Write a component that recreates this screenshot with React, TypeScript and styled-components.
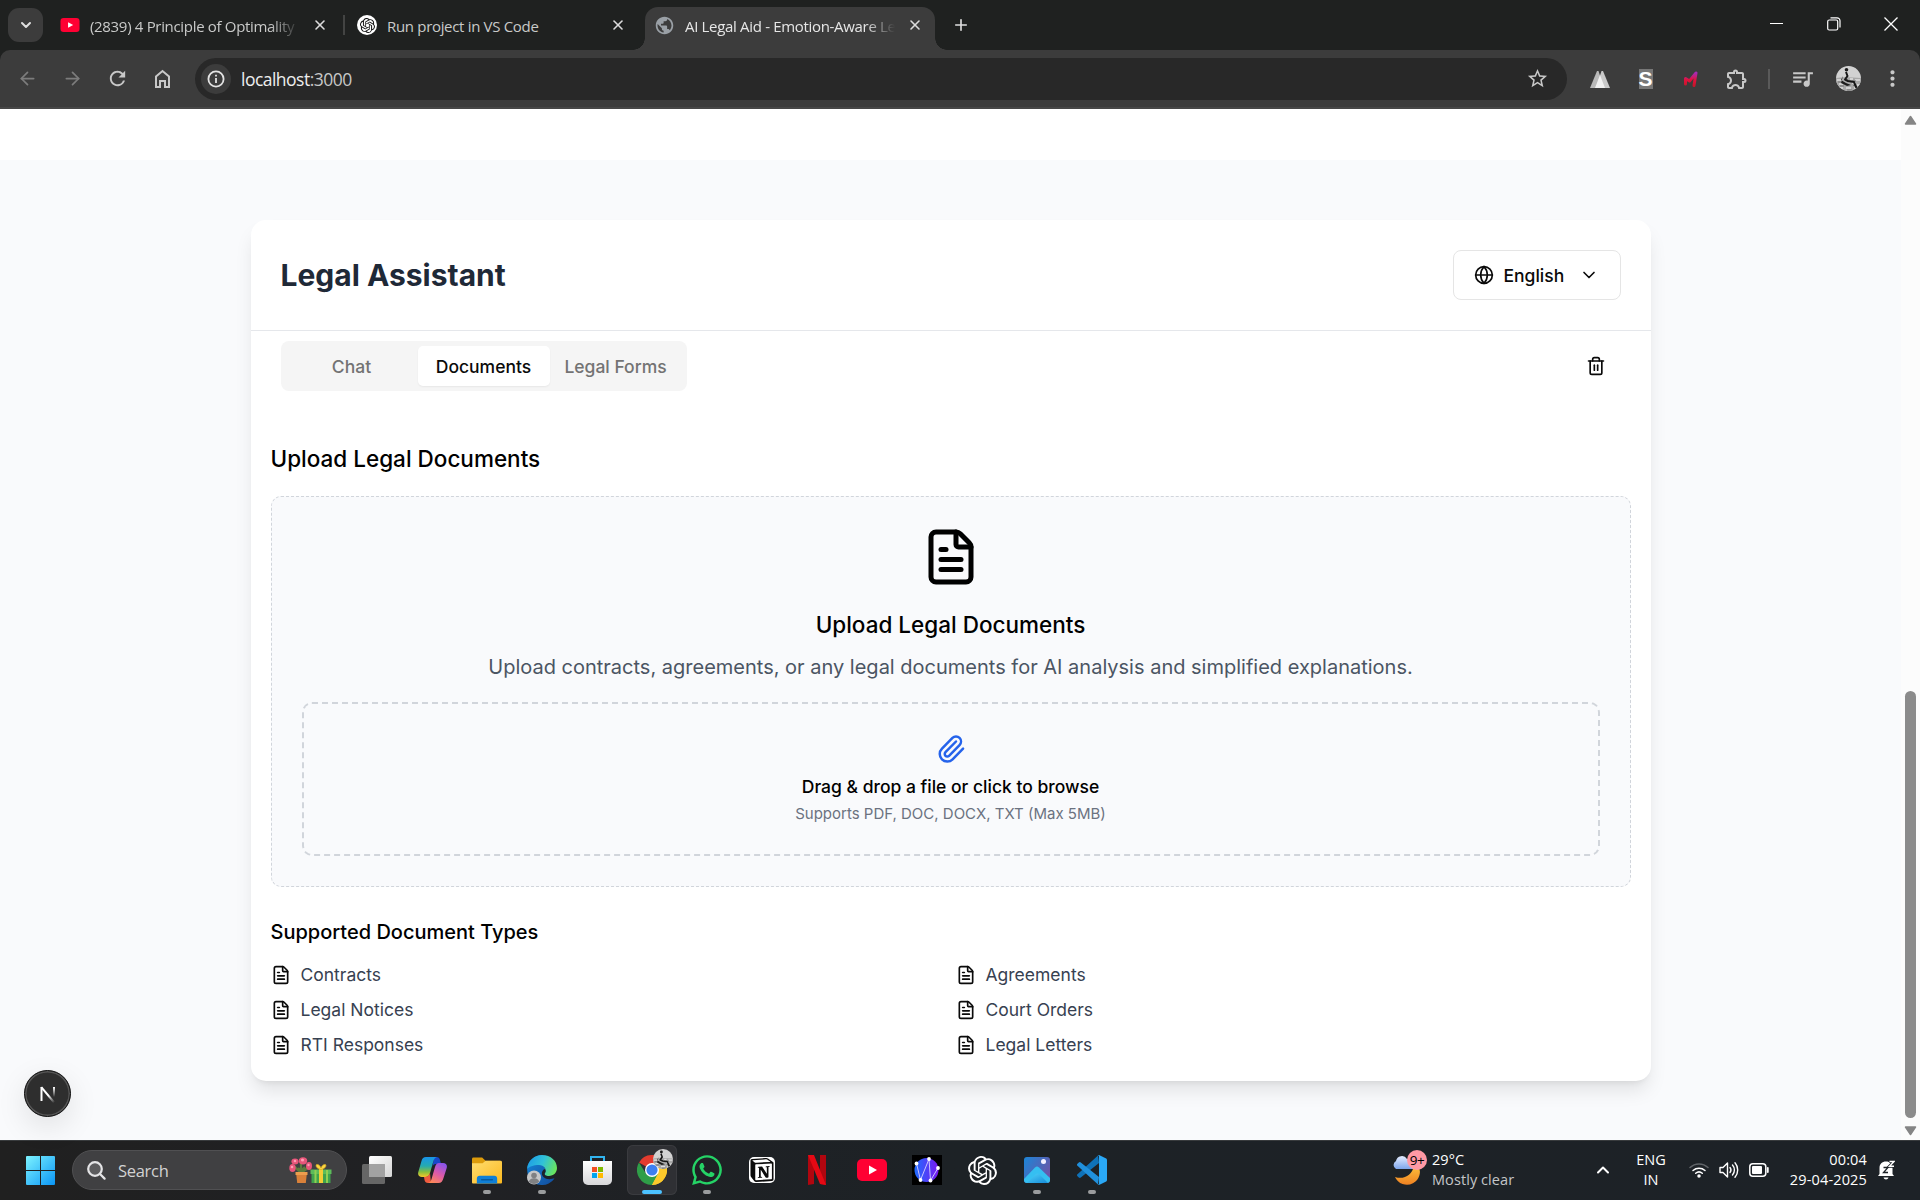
import React from "react";
import styled, { createGlobalStyle } from "styled-components";
import { ChevronDown, ChevronUp, FileText, Globe, Paperclip, Trash2, ArrowLeft, ArrowRight, Plus, X } from "lucide-react";
import { MdRefresh, MdStarBorder, MdQueueMusic, MdOutlineExtension, MdMoreVert, MdPublic } from "react-icons/md";
import { SiOpenai, SiNotion } from "react-icons/si";
import { FaWhatsapp } from "react-icons/fa";

const Global = createGlobalStyle`
  * { box-sizing: border-box; }
  body { margin: 0; background: #fff; overflow: hidden; }
  h1, h2, h3, p, ul { margin: 0; padding: 0; font-weight: 400; }
  button { border: 0; padding: 0; background: none; font: inherit; color: inherit; }
  svg { display: block; flex: none; }
`;

const systemFont = `"Open Sans", "Noto Sans", sans-serif`;

const Screen = styled.div`
  width: 1920px;
  height: 1200px;
  display: flex;
  flex-direction: column;
  overflow: hidden;
  font-family: Inter, sans-serif;
`;

/* ---------- Browser chrome ---------- */

const TabStrip = styled.div`
  height: 50px;
  flex: none;
  display: flex;
  background: #1f2120;
  padding-left: 8px;
  color: #dfdfdf;
  font-family: ${systemFont};
`;

const TabSearch = styled.button`
  width: 35px;
  height: 34px;
  margin-top: 8px;
  border-radius: 11px;
  background: #3c3c3c;
  display: grid;
  place-items: center;
`;

const Tab = styled.div<{ $width: number; $active?: boolean; $left?: number }>`
  width: ${(p) => p.$width}px;
  height: ${(p) => (p.$active ? 43 : 36)}px;
  margin-top: 7px;
  padding: ${(p) => (p.$active ? "0 12px 7px 9px" : `0 15px 0 ${p.$left ?? 17}px`)};
  display: flex;
  align-items: center;
  position: relative;
  background: ${(p) => (p.$active ? "#3c3c3c" : "transparent")};
  color: ${(p) => (p.$active ? "#e6e6e6" : "#c9cac9")};
  border-radius: 13px 13px 0 0;
  ${(p) =>
    p.$active &&
    `margin-left: 4px;
    &::before, &::after {
      content: "";
      position: absolute;
      bottom: 0;
      width: 12px;
      height: 12px;
    }
    &::before { right: 100%; background: radial-gradient(circle at 0 0, transparent 11.5px, #3c3c3c 12px); }
    &::after { left: 100%; background: radial-gradient(circle at 100% 0, transparent 11.5px, #3c3c3c 12px); }`}
`;

const TabTitle = styled.span<{ $fade?: boolean }>`
  flex: 1;
  min-width: 0;
  margin: 1px 0 0 10px;
  font-size: 15px;
  line-height: 24px;
  letter-spacing: -0.32px;
  white-space: nowrap;
  ${(p) => p.$fade && "mask-image: linear-gradient(90deg, #000 calc(100% - 42px), transparent calc(100% - 12px));"}
`;

const TabDivider = styled.div`
  width: 2px;
  height: 20px;
  margin: 15px 0 0;
  background: #434443;
`;

const Favicon = styled.div`
  width: 20px;
  height: 20px;
  border-radius: 50%;
  background: #fff;
  color: #111;
  display: grid;
  place-items: center;
`;

const NewTab = styled.button`
  width: 51px;
  height: 50px;
  display: grid;
  place-items: center;
`;

const WindowButtons = styled.div`
  margin-left: auto;
  margin-right: 1px;
  display: flex;
  color: #fff;
`;

const WindowButton = styled.button`
  width: 57px;
  height: 48px;
  display: grid;
  place-items: center;
`;

const ToolbarWrap = styled.div`
  height: 59px;
  flex: none;
  background: #1f2120;
`;

const Toolbar = styled.div`
  height: 59px;
  border-radius: 10px 10px 0 0;
  background: #3c3c3c;
  border-bottom: 2px solid #474747;
  display: flex;
  align-items: center;
  padding: 0 2px 0 5px;
  color: #c8c8c8;
  font-family: ${systemFont};
`;

const ToolButton = styled.button<{ $dim?: boolean; $width?: number }>`
  width: ${(p) => p.$width ?? 45}px;
  height: 42px;
  display: grid;
  place-items: center;
  color: ${(p) => (p.$dim ? "#7c7c7c" : "#c8c8c8")};
`;

const Omnibox = styled.div`
  width: 1372px;
  height: 42px;
  margin-left: 10px;
  border-radius: 21px;
  background: #282828;
  display: flex;
  align-items: center;
  padding: 0 18px 0 6px;
`;

const SiteInfo = styled.div`
  width: 30px;
  height: 30px;
  border-radius: 50%;
  background: #3c3c3c;
  display: grid;
  place-items: center;
`;

const Address = styled.div`
  flex: 1;
  margin-left: 10px;
  font-size: 17.5px;
  letter-spacing: -0.52px;
  color: #c7c7c7;
  span { color: #eee; }
`;

const Extensions = styled.div`
  display: flex;
  align-items: center;
  margin-left: 10px;
`;

const ToolDivider = styled.div`
  width: 2px;
  height: 20px;
  margin: 0 10px 0 8px;
  background: #5a5a5a;
`;

const SLetter = styled.span`
  width: 14px;
  height: 20px;
  background: #777;
  color: #fff;
  font: 700 21px/20px "Liberation Sans", sans-serif;
  display: grid;
  place-items: center;
`;

/* ---------- Page ---------- */

const Viewport = styled.div`
  flex: 1;
  min-height: 0;
  display: flex;
`;

const Page = styled.div`
  position: relative;
  width: 1901px;
  background: #f9fafc;
  border-top: 51px solid #fff;
  padding: 60px 250.500px 0;
`;

const Card = styled.main`
  height: 861px;
  border-radius: 15px;
  background: #fff;
  box-shadow: 0 12.5px 18.75px -3.75px rgba(0, 0, 0, 0.1), 0 5px 7.5px -5px rgba(0, 0, 0, 0.1);
`;

const CardHeader = styled.header`
  height: 111px;
  padding: 0 30px;
  border-bottom: 1px solid #e5e7eb;
  display: flex;
  align-items: center;
  justify-content: space-between;
`;

const Title = styled.h1`
  font-size: 30px;
  line-height: 40px;
  font-weight: 700;
  color: #1f2937;
`;

const LanguageButton = styled.button`
  width: 168px;
  height: 50px;
  padding: 0 20px;
  border: 1px solid #e5e5e5;
  border-radius: 8px;
  display: flex;
  align-items: center;
  font-size: 17.5px;
  font-weight: 500;
  color: #0a0a0a;
  span { margin: 0 15px 0 10px; }
`;

const TabsRow = styled.div`
  height: 60px;
  padding: 10px 30px 0;
  display: flex;
  justify-content: space-between;
`;

const TabsList = styled.div`
  width: 406px;
  height: 50px;
  padding: 5px;
  border-radius: 8px;
  background: #f5f5f5;
  display: grid;
  grid-template-columns: repeat(3, 1fr);
`;

const TabTrigger = styled.button<{ $active?: boolean }>`
  border-radius: 5px;
  font-size: 17.5px;
  font-weight: 500;
  white-space: nowrap;
  color: ${(p) => (p.$active ? "#0a0a0a" : "#737373")};
  background: ${(p) => (p.$active ? "#fff" : "transparent")};
  box-shadow: ${(p) => (p.$active ? "0 1px 2px rgba(0, 0, 0, 0.06)" : "none")};
`;

const ClearButton = styled.button`
  width: 50px;
  height: 50px;
  display: grid;
  place-items: center;
  color: #0a0a0a;
`;

const Content = styled.section`
  padding: 50px 20px 0;
  color: #000;
`;

const Heading = styled.h2`
  font-size: 22.5px;
  line-height: 35px;
  font-weight: 500;
`;

const UploadPanel = styled.div`
  height: 391px;
  margin-top: 20px;
  padding: 30px;
  border: 1px dashed #d1d5db;
  border-radius: 10px;
  background: #f9fafc;
  display: flex;
  flex-direction: column;
  align-items: center;
  ${Heading} { margin-top: 20px; }
`;

const Lead = styled.p`
  margin: 10px 0 20px;
  font-size: 20px;
  line-height: 30px;
  color: #4b5563;
`;

const DropZone = styled.div`
  width: 100%;
  height: 154px;
  padding-top: 30px;
  border: 2px dashed #d1d5db;
  border-radius: 10px;
  display: flex;
  flex-direction: column;
  align-items: center;
`;

const DropTitle = styled.p`
  margin-top: 10px;
  font-size: 17.5px;
  line-height: 25px;
  font-weight: 500;
`;

const DropHint = styled.p`
  margin-top: 5px;
  font-size: 15px;
  line-height: 20px;
  color: #6b7280;
`;

const TypesHeading = styled.h3`
  margin: 30px 0 15px;
  font-size: 20px;
  line-height: 30px;
  font-weight: 500;
`;

const TypeGrid = styled.ul`
  display: grid;
  grid-template-columns: 1fr 1fr;
  gap: 10px;
  list-style: none;
`;

const TypeItem = styled.li`
  display: flex;
  align-items: center;
  gap: 10px;
  font-size: 17.5px;
  line-height: 25px;
  color: #374151;
  svg { color: #0a0a0a; }
`;

const DevBadge = styled.div`
  position: absolute;
  left: 24px;
  bottom: 23px;
  width: 47px;
  height: 47px;
  border-radius: 50%;
  background: #2e2e2e;
  border: 1px solid #111;
  box-shadow: inset 0 0 0 1.5px #555, 0 10px 30px rgba(0, 0, 0, 0.1);
  display: grid;
  place-items: center;
`;

const Scrollbar = styled.div`
  width: 19px;
  background: #fcfcfc;
  display: flex;
  flex-direction: column;
  align-items: center;
  padding: 6px 0 4px;
`;

const Thumb = styled.div`
  width: 11px;
  height: 427px;
  margin: auto 0 8px;
  border-radius: 6px;
  background: #8b8b8b;
`;

/* ---------- Taskbar ---------- */

const Taskbar = styled.footer`
  height: 60px;
  flex: none;
  display: flex;
  align-items: center;
  background: linear-gradient(90deg, #202020, #202124 25%, #1d2226 50%, #1d2227);
  border-top: 1px solid #383b3d;
  padding: 0 0 1px 26px;
  color: #fff;
  font-family: ${systemFont};
`;

const SearchPill = styled.div`
  width: 275px;
  height: 40px;
  margin: 0 5px 0 17px;
  padding: 0 14px;
  border-radius: 20px;
  background: #404042;
  border: 1px solid #505052;
  display: flex;
  align-items: center;
  font-size: 16.5px;
  letter-spacing: -0.3px;
  color: #d2d2d2;
  span { flex: 1; margin-left: 12px; }
`;

const AppSlot = styled.div<{ $focused?: boolean; $running?: boolean }>`
  position: relative;
  width: 50px;
  height: 50px;
  margin-right: 5px;
  border-radius: 6px;
  display: grid;
  place-items: center;
  background: ${(p) => (p.$focused ? "#2f3034" : "transparent")};
  box-shadow: ${(p) => (p.$focused ? "inset 0 0 0 1px #3a3b3f" : "none")};
  &::after {
    content: "";
    display: ${(p) => (p.$running || p.$focused ? "block" : "none")};
    position: absolute;
    bottom: 1px;
    left: ${(p) => (p.$focused ? 15 : 21)}px;
    width: ${(p) => (p.$focused ? 20 : 8)}px;
    height: 4px;
    border-radius: 2px;
    background: ${(p) => (p.$focused ? "#4cc2ff" : "#9a9c9e")};
  }
`;

const Tray = styled.div`
  margin-left: auto;
  display: flex;
  align-items: center;
  font-size: 14.5px;
  line-height: 20px;
`;

const Stack = styled.div<{ $width: number; $align: string; $muted?: boolean; $spacing?: number }>`
  width: ${(p) => p.$width}px;
  display: flex;
  flex-direction: column;
  margin-bottom: 1px;
  white-space: nowrap;
  text-align: ${(p) => p.$align};
  letter-spacing: ${(p) => p.$spacing ?? 0}px;
  span:last-child { color: ${(p) => (p.$muted ? "#c4c6c8" : "#fff")}; }
`;

const WeatherBox = styled.div`
  position: relative;
  width: 35px;
  height: 36px;
  margin: 0 5px 5px 0;
`;

const WeatherBadge = styled.span`
  position: absolute;
  top: 0;
  right: 0;
  width: 20px;
  height: 20px;
  border-radius: 50%;
  background: #ff99a4;
  color: #000;
  font-size: 13.5px;
  line-height: 20px;
  letter-spacing: -0.5px;
  text-align: center;
`;

const TrayIcon = styled.div<{ $width: number }>`
  width: ${(p) => p.$width}px;
  display: grid;
  place-items: center;
`;

/* ---------- Drawings ---------- */

const YouTube = ({ w, h }: { w: number; h: number }) => (
  <svg width={w} height={h} viewBox="0 0 30 22">
    <rect width="30" height="22" rx="5" fill="#ff0033" />
    <path d="M12 6.5v9l8-4.5z" fill="#fff" />
  </svg>
);

const HomeIcon = () => (
  <svg width="17" height="20" viewBox="0 0 17 20" fill="none" stroke="currentColor" strokeWidth="2">
    <path d="M2 7.500 8.500 2 15 7.500V18h-4v-6H6v6H2z" />
  </svg>
);

const InfoIcon = () => (
  <svg width="18" height="18" viewBox="0 0 18 18" fill="none" stroke="#e3e3e3" strokeWidth="1.8">
    <circle cx="9" cy="9" r="7.6" />
    <path d="M9 8v5M9 4.8v1.8" />
  </svg>
);

const RestoreIcon = () => (
  <svg width="14" height="14" viewBox="0 0 14 14" fill="none" stroke="#fff" strokeWidth="1.2">
    <rect x=".7" y="3" width="10" height="10" rx="1.5" />
    <path d="M3.5.8H10a3 3 0 0 1 3 3v6.7" />
  </svg>
);

const PeaksIcon = () => (
  <svg width="20" height="18" viewBox="0 0 20 18">
    <path d="M0 18 7 1h1.500L14 18z" fill="#b9b9b9" />
    <path d="M6 18 11.500 1H13l7 17z" fill="#c9c9c9" />
    <path d="M5 18 10 5l5 13z" fill="#f1f1f1" />
  </svg>
);

const MarkIcon = () => (
  <svg width="16" height="18" viewBox="0 0 16 18" fill="none" strokeLinecap="round" strokeLinejoin="round">
    <defs>
      <linearGradient id="mark" x1="0" y1="0" x2="0" y2="1">
        <stop offset="0" stopColor="#a72bb5" />
        <stop offset=".55" stopColor="#e0123c" />
        <stop offset="1" stopColor="#c9152c" />
      </linearGradient>
    </defs>
    <path d="M2.5 14V8.500L6.500 11l6.500-8-2 12.500" stroke="url(#mark)" strokeWidth="3" />
  </svg>
);

const Portrait = ({ size }: { size: number }) => (
  <svg width={size} height={size} viewBox="0 0 25 25">
    <clipPath id={`face${size}`}><circle cx="12.5" cy="12.5" r="12.5" /></clipPath>
    <g clipPath={`url(#face${size})`}>
      <rect width="25" height="25" fill="#d2d2d2" />
      <path d="M0 12 9 11l16 1v13H0z" fill="#a8a8a8" />
      <path d="M1 14h5M14 13h3M19 14h5M3 18h4M16 17h4M2 22h5M21 19h4M10 22h5M18 22h3" stroke="#dedede" strokeWidth="1.500" />
      <path d="M2 16h3M16 15h4M4 20h4M17 19.500h3M11 24h5" stroke="#757575" strokeWidth="1.200" />
      <circle cx="10.500" cy="3.800" r="1.800" fill="#1b1b1b" />
      <path d="m10 6 1.500 4-2.500 3.500 3 1.500 6 1 2.500 6" stroke="#161616" strokeWidth="2" fill="none" strokeLinejoin="round" />
      <path d="m7 10-2 4 5 3 5 2-4 1-6-3z" fill="#1c1c1c" />
    </g>
  </svg>
);

const NextMark = () => (
  <svg width="18" height="18" viewBox="0 0 18 18" fill="none" strokeWidth="2">
    <defs>
      <linearGradient id="nd" gradientUnits="userSpaceOnUse" x1="10" y1="10" x2="16" y2="17">
        <stop stopColor="#fff" /><stop offset="1" stopColor="#fff" stopOpacity="0" />
      </linearGradient>
      <linearGradient id="nv" gradientUnits="userSpaceOnUse" x1="15" y1="2" x2="15" y2="12">
        <stop stopColor="#fff" /><stop offset="1" stopColor="#fff" stopOpacity="0" />
      </linearGradient>
    </defs>
    <path d="M2.5 16V2" stroke="#fff" />
    <path d="M2.3 2.2 15.5 18" stroke="url(#nd)" />
    <path d="M15 2v10" stroke="url(#nv)" />
  </svg>
);

const Triangle = ({ down }: { down?: boolean }) => (
  <svg width="13" height="10" viewBox="0 0 13 10">
    <path d={down ? "M1.5 1h10l-5 7.5z" : "M1.5 9h10l-5-7.5z"} fill="#858585" stroke="#858585" strokeWidth="1.5" strokeLinejoin="round" />
  </svg>
);

const WindowsLogo = () => (
  <svg width="29" height="29" viewBox="0 0 29 29">
    <defs>
      <linearGradient id="win" x1="0" y1="0" x2="1" y2="1">
        <stop stopColor="#7df3ff" /><stop offset="1" stopColor="#0a95f5" />
      </linearGradient>
    </defs>
    <path d="M1 0h13v14H0V1a1 1 0 0 1 1-1zM15 0h13a1 1 0 0 1 1 1v13H15zM0 15h14v14H1a1 1 0 0 1-1-1zM15 15h14v13a1 1 0 0 1-1 1H15z" fill="url(#win)" />
  </svg>
);

const SearchIcon = () => (
  <svg width="19" height="19" viewBox="0 0 19 19" fill="none" stroke="#e4e4e6" strokeWidth="2.2" strokeLinecap="round">
    <circle cx="8" cy="8" r="6.8" fill="#5c5c5e" />
    <path d="m13 13 4.6 4.6" />
  </svg>
);

const GiftArt = () => (
  <svg width="43" height="27" viewBox="0 0 43 27">
    <path d="M12 16 5 9m7 7V6m0 10 8-6m-8 4L9 11m3 3 4-4" stroke="#5d7c3d" strokeWidth="2.2" fill="none" />
    <g fill="#e8557a">
      <ellipse cx="3.5" cy="11" rx="3.2" ry="4" /><ellipse cx="6" cy="4.5" rx="3.6" ry="3" />
      <ellipse cx="14" cy="3.8" rx="4.2" ry="3.6" /><ellipse cx="20" cy="9" rx="3" ry="4" />
    </g>
    <g fill="#ff9cb4">
      <circle cx="3" cy="10" r="1.3" /><circle cx="6" cy="4" r="1.3" /><circle cx="13.5" cy="3" r="1.6" /><circle cx="19.5" cy="8" r="1.2" />
    </g>
    <path d="M7 15h11l-1.2 11H8.2z" fill="#d9813a" /><path d="M6.5 15h12v3h-12z" fill="#ed9d4e" />
    <path d="M22.5 15h19v11h-19z" fill="#3fa34d" /><path d="M21.5 12.5h21V17h-21z" fill="#5cbc5a" />
    <path d="M25.500 13h2v13h-2zM37 13h2v13h-2z" fill="#8fd052" />
    <path d="M30 12h4v14h-4z" fill="#f4cd35" />
    <path d="M32 12.5c-5-1-5.500-4-4.500-5 2-.5 3.500 1 4.500 3.500 1-2.500 2.500-4 4.500-3.500 1 1 .5 4-4.500 5z" fill="#f9d743" stroke="#d7a51d" strokeWidth=".7" />
  </svg>
);

const TaskViewIcon = () => (
  <svg width="30" height="28" viewBox="0 0 30 28">
    <defs><linearGradient id="tv" x1="0" y1="0" x2="1" y2="1"><stop stopColor="#fff" /><stop offset="1" stopColor="#d5d5d5" /></linearGradient></defs>
    <rect x="7" width="23" height="21" rx="1.5" fill="url(#tv)" />
    <rect y="8" width="23" height="20" rx="1.5" fill="#666" />
    <path d="M7 8h15a1 1 0 0 1 1 1v12H7z" fill="#a2a2a2" />
  </svg>
);

const CopilotIcon = () => (
  <svg width="29" height="26" viewBox="0 0 29 26">
    <defs>
      <linearGradient id="cp1" x1="0" y1="0" x2="0" y2="1"><stop stopColor="#1994ea" /><stop offset=".45" stopColor="#25aab0" /><stop offset=".75" stopColor="#89bf3c" /><stop offset="1" stopColor="#f7c72b" /></linearGradient>
      <linearGradient id="cp2" x1=".7" y1="0" x2=".2" y2="1"><stop stopColor="#8b54ea" /><stop offset=".5" stopColor="#dc5aa8" /><stop offset="1" stopColor="#ff8a54" /></linearGradient>
    </defs>
    <path d="M16 0h2.500c2 0 3 1 3.500 3l1 4h-5c-2 0-3 1-3.500 3z" fill="#1748c9" />
    <path d="M8 0h11c-2 .5-3 2-3.700 4.500L12 16c-.8 2.500-2 4-4.500 4H4c-3 0-4.500-2-3.700-5L3.500 4C4.200 1.500 5.500 0 8 0z" fill="url(#cp1)" />
    <path d="M13 26H10c-2 0-3-1-3.500-3L6 20c3 0 5-1 6-4z" fill="#f05b3f" />
    <path d="M21 6h4c3 0 4.500 2 3.700 5L25.500 21c-.8 3-2.200 5-5 5H10c2-.5 3-2 3.700-4.500L17 10c.8-2.500 2-4 4-4z" fill="url(#cp2)" />
  </svg>
);

const FolderIcon = () => (
  <svg width="30" height="27" viewBox="0 0 31 27">
    <defs><linearGradient id="fo" x1="0" y1="0" x2="1" y2="1"><stop stopColor="#ffdd70" /><stop offset="1" stopColor="#fcb91f" /></linearGradient></defs>
    <path d="M1.500 0h9L14 3.500h15V12H0V1.500A1.500 1.500 0 0 1 1.500 0z" fill="#dd9b0b" />
    <path d="M0 6h11l3-2.500h15.500A1.500 1.500 0 0 1 31 5v21a1 1 0 0 1-1 1H1a1 1 0 0 1-1-1z" fill="url(#fo)" />
    <path d="M5 27v-5a3 3 0 0 1 3-3h15a3 3 0 0 1 3 3v5z" fill="#0f7fd6" />
    <path d="M10 23h11" stroke="#075a9f" strokeWidth="1.500" strokeLinecap="round" />
  </svg>
);

const EdgeIcon = () => (
  <svg width="30" height="30" viewBox="0 0 30 30">
    <defs>
      <linearGradient id="e1" x1="0" y1=".3" x2="1" y2=".6"><stop stopColor="#1d9de6" /><stop offset=".5" stopColor="#31c2d8" /><stop offset="1" stopColor="#6be55a" /></linearGradient>
      <linearGradient id="e2" x1="0" y1="0" x2="1" y2="1"><stop stopColor="#1689dc" /><stop offset="1" stopColor="#124b9b" /></linearGradient>
    </defs>
    <path d="M15 0a15 15 0 1 0 12.500 23.500L20 20l-3-10z" fill="url(#e2)" />
    <path d="M0 14C1 5 8 0 15 0c9 0 15 6 15 13 0 5-4 8-8 8-4 0-5-1.500-4-3 2-4-1-8-6-8C6 10 2 12 0 14z" fill="url(#e1)" />
    <path d="M18 18c-1 1.500 0 3 4 3 2 0 4-.5 5.500-1.500L27.500 23c-3 1.500-8 2-11-1-2.500-2.500-2-6 1-8 1.500 1 1.500 3 .5 4z" fill="#1e2227" />
    <circle cx="7" cy="22.500" r="7" fill="#c6c7c8" /><circle cx="7" cy="20.500" r="2.800" fill="#808183" />
    <path d="M2 27c0-5 10-5 10 0a7 7 0 0 1-10 0z" fill="#808183" />
  </svg>
);

const StoreIcon = () => (
  <svg width="29" height="29" viewBox="0 0 29 29">
    <defs><linearGradient id="st" x1="0" y1="0" x2="0" y2="1"><stop stopColor="#fff" /><stop offset="1" stopColor="#d7d7d9" /></linearGradient></defs>
    <path d="M8 5V1h13v4" stroke="#31b4ef" strokeWidth="2" fill="none" />
    <path d="M0 5h29v19a5 5 0 0 1-5 5H5a5 5 0 0 1-5-5z" fill="url(#st)" />
    <path d="M9 11h5v5H9z" fill="#f25022" /><path d="M15 11h5v5h-5z" fill="#7fba00" />
    <path d="M9 17h5v5H9z" fill="#00a4ef" /><path d="M15 17h5v5h-5z" fill="#ffb900" />
  </svg>
);

const ChromeBox = styled.div`
  position: relative;
  width: 30px;
  height: 30px;
  & > svg:last-child { position: absolute; right: -6px; top: -6px; }
`;

const ChromeIcon = () => (
  <ChromeBox>
    <svg width="30" height="30" viewBox="0 0 30 30">
      <path d="M15 15 2 7.500A15 15 0 0 1 28 7.500z" fill="#e33b2e" />
      <path d="M15 15 28 7.500A15 15 0 0 1 15 30z" fill="#fdc92b" />
      <path d="M8.900 18.500 2 7.500A15 15 0 0 0 15 30l6.100-11z" fill="#2f9e48" />
      <path d="M15 8h13.200A15 15 0 0 1 15 30l6.200-11.500z" fill="#fdc92b" />
      <circle cx="15" cy="15" r="7" fill="#fff" /><circle cx="15" cy="15" r="5.600" fill="#3c7ff0" />
    </svg>
    <Portrait size={20} />
  </ChromeBox>
);

const NotionBox = styled.div`
  width: 26px;
  height: 26px;
  border-radius: 5px;
  background: #fff;
  color: #0b0b0b;
  display: grid;
  place-items: center;
`;

const NetflixIcon = () => (
  <svg width="18" height="30" viewBox="0 0 18 30">
    <path d="M0 0h6v29l-6 1zM12 0h6v30l-6-1z" fill="#b1060f" />
    <path d="M0 0h6l12 30-6-1z" fill="#e50914" />
  </svg>
);

const NetworkIcon = () => (
  <svg width="30" height="30" viewBox="0 0 30 30">
    <defs><linearGradient id="nw"><stop stopColor="#1f6dff" /><stop offset="1" stopColor="#7a18f0" /></linearGradient></defs>
    <rect width="30" height="30" fill="#000" />
    <circle cx="14.500" cy="15" r="12" fill="url(#nw)" />
    <path d="M4.500 8.500 8.500 25 17 4l1.500 21.500L26 13" fill="none" stroke="#c9c3ff" strokeWidth="1" />
    <g fill="#fff"><circle cx="4.500" cy="8.500" r="1.900" /><circle cx="8.500" cy="25" r="1.900" /><circle cx="17" cy="4" r="1.900" /><circle cx="18.500" cy="25.500" r="1.900" /><circle cx="26" cy="13" r="1.900" /></g>
  </svg>
);

const PhotosIcon = () => (
  <svg width="26" height="26" viewBox="0 0 26 26">
    <defs>
      <linearGradient id="p1" x1="0" y1="0" x2="1" y2=".6"><stop stopColor="#1b86d8" /><stop offset="1" stopColor="#6b55a8" /></linearGradient>
      <linearGradient id="p2" x1="0" y1="0" x2="1" y2="1"><stop stopColor="#4fd2fa" /><stop offset="1" stopColor="#168bd8" /></linearGradient>
      <clipPath id="pc"><rect width="26" height="26" rx="3" /></clipPath>
    </defs>
    <g clipPath="url(#pc)">
      <rect width="26" height="26" fill="url(#p1)" />
      <path d="m0 22 11-11.500a3 3 0 0 1 4 0L26 21v5H0z" fill="#35bff1" />
      <path d="m3 26 8.500-8.500a3 3 0 0 1 4 0L24 26z" fill="url(#p2)" />
      <circle cx="19.500" cy="4.500" r="2.500" fill="#f3efff" />
    </g>
  </svg>
);

const CodeIcon = () => (
  <svg width="30" height="30" viewBox="0 0 30 30">
    <path d="M22 8 3.800 22.500a1.500 1.500 0 0 1-2 0L.5 21.200a1.300 1.300 0 0 1 0-2L21 .6z" fill="#0f72b8" />
    <path d="M22 22 3.800 7.500a1.500 1.500 0 0 0-2 0L.5 8.800a1.300 1.300 0 0 0 0 2L21 29.400z" fill="#2090dc" />
    <path d="M20.500.7c.6-.7 1.300-.8 2-.5l6.200 3c.8.400 1.300 1.100 1.300 2v19.600c0 .9-.5 1.600-1.300 2l-6.200 3c-.7.300-1.400.2-2-.5.9.6 1.500.1 1.500-.8V1.500c0-.9-.6-1.400-1.500-.8z" fill="#2aa8f5" />
  </svg>
);

const CloudMoon = () => (
  <svg width="30" height="36" viewBox="0 0 30 36">
    <defs>
      <linearGradient id="mo" x1="0" y1="0" x2="0" y2="1"><stop stopColor="#ffc43c" /><stop offset="1" stopColor="#ee8122" /></linearGradient>
      <linearGradient id="cl" x1="0" y1="0" x2="0" y2="1"><stop stopColor="#e3ecff" /><stop offset="1" stopColor="#7ea6ec" /></linearGradient>
    </defs>
    <path d="M26 15a13 13 0 1 1-23 12c9 3 17-2 19-11z" fill="url(#mo)" />
    <path d="M4 19a4.500 4.500 0 0 1 0-8 6 6 0 0 1 11-2 6 6 0 0 1 7 4v6z" fill="url(#cl)" />
  </svg>
);

const WifiIcon = () => (
  <svg width="20" height="16" viewBox="0 0 20 16" fill="none" stroke="#fff" strokeWidth="1.500" strokeLinecap="round">
    <path d="M1 5.500a13 13 0 0 1 18 0" stroke="#606468" />
    <path d="M4 8.500a9 9 0 0 1 12 0M6.700 11.300a5 5 0 0 1 6.600 0" />
    <circle cx="10" cy="14" r="1" fill="#fff" />
  </svg>
);

const VolumeIcon = () => (
  <svg width="20" height="18" viewBox="0 0 20 18" fill="none" stroke="#fff" strokeWidth="1.400" strokeLinecap="round" strokeLinejoin="round">
    <path d="M1 6.500h3L8.500 2v14L4 11.500H1z" />
    <path d="M11 6.500a4 4 0 0 1 0 5M13.500 4a7.500 7.500 0 0 1 0 10M16 1.800a11 11 0 0 1 0 14.400" />
  </svg>
);

const BatteryIcon = () => (
  <svg width="20" height="14" viewBox="0 0 20 14">
    <rect x=".8" y=".8" width="16" height="12.400" rx="3" fill="none" stroke="#fff" strokeWidth="1.500" />
    <rect x="3" y="3" width="10" height="8" rx="1" fill="#fff" />
    <path d="M18.800 5v4" stroke="#fff" strokeWidth="1.800" strokeLinecap="round" />
  </svg>
);

const BellIcon = () => (
  <svg width="17" height="20" viewBox="0 0 17 20">
    <path d="M1.500 14V8c0-4 2.500-6.500 6.500-6.500S14.500 4 14.500 8v6l1.500 2H0z" fill="#fff" />
    <path d="M5.500 17.500h5c-.5 2.500-4.500 2.500-5 0z" fill="#fff" />
    <path d="M5.500 7.500H10l-4.500 5H10" stroke="#1d2227" strokeWidth="1.300" fill="none" />
    <path d="M11.500 1.500H16l-4.500 4.700H16" stroke="#1d2227" strokeWidth="3" fill="none" />
    <path d="M11.500 1.500H16l-4.500 4.700H16" stroke="#fff" strokeWidth="1.400" fill="none" />
  </svg>
);

const CloseX = () => <X size={16} strokeWidth={2.4} color="#dcdcdc" />;

const documentTypes = ["Contracts", "Agreements", "Legal Notices", "Court Orders", "RTI Responses", "Legal Letters"];

export default function App() {
  return (
    <Screen>
      <Global />
      <TabStrip>
        <TabSearch><ChevronDown size={16} strokeWidth={3} /></TabSearch>
        <Tab $width={300}>
          <YouTube w={20} h={14} />
          <TabTitle $fade>(2839) 4 Principle of Optimality</TabTitle>
          <CloseX />
        </Tab>
        <TabDivider />
        <Tab $width={296} $left={12}>
          <Favicon><SiOpenai size={15} /></Favicon>
          <TabTitle>Run project in VS Code</TabTitle>
          <CloseX />
        </Tab>
        <Tab $width={290} $active>
          <MdPublic size={21} color="#9aa0a6" />
          <TabTitle $fade>AI Legal Aid - Emotion-Aware Le</TabTitle>
          <CloseX />
        </Tab>
        <NewTab><Plus size={18} strokeWidth={2.2} /></NewTab>
        <WindowButtons>
          <WindowButton><svg width="13" height="13"><path d="M0 5.500h13" stroke="#fff" /></svg></WindowButton>
          <WindowButton><RestoreIcon /></WindowButton>
          <WindowButton><svg width="14" height="14"><path d="m.5.5 13 13m0-13-13 13" stroke="#fff" strokeWidth="1.300" /></svg></WindowButton>
        </WindowButtons>
      </TabStrip>

      <ToolbarWrap>
        <Toolbar>
          <ToolButton $dim><ArrowLeft size={21} /></ToolButton>
          <ToolButton $dim><ArrowRight size={21} /></ToolButton>
          <ToolButton><MdRefresh size={23} /></ToolButton>
          <ToolButton><HomeIcon /></ToolButton>
          <Omnibox>
            <SiteInfo><InfoIcon /></SiteInfo>
            <Address><span>localhost</span>:3000</Address>
            <MdStarBorder size={23} />
          </Omnibox>
          <Extensions>
            <ToolButton $width={46}><PeaksIcon /></ToolButton>
            <ToolButton><SLetter>S</SLetter></ToolButton>
            <ToolButton><MarkIcon /></ToolButton>
            <ToolButton $width={47}><MdOutlineExtension size={24} /></ToolButton>
            <ToolDivider />
            <ToolButton><MdQueueMusic size={25} /></ToolButton>
            <ToolButton $width={46}><Portrait size={25} /></ToolButton>
            <ToolButton $width={43}><MdMoreVert size={25} /></ToolButton>
          </Extensions>
        </Toolbar>
      </ToolbarWrap>

      <Viewport>
        <Page>
          <Card>
            <CardHeader>
              <Title>Legal Assistant</Title>
              <LanguageButton>
                <Globe size={20} />
                <span>English</span>
                <ChevronDown size={20} />
              </LanguageButton>
            </CardHeader>
            <TabsRow>
              <TabsList>
                <TabTrigger>Chat</TabTrigger>
                <TabTrigger $active>Documents</TabTrigger>
                <TabTrigger>Legal Forms</TabTrigger>
              </TabsList>
              <ClearButton><Trash2 size={20} /></ClearButton>
            </TabsRow>
            <Content>
              <Heading>Upload Legal Documents</Heading>
              <UploadPanel>
                <FileText size={60} />
                <Heading>Upload Legal Documents</Heading>
                <Lead>Upload contracts, agreements, or any legal documents for AI analysis and simplified explanations.</Lead>
                <DropZone>
                  <Paperclip size={30} color="#2563eb" />
                  <DropTitle>Drag &amp; drop a file or click to browse</DropTitle>
                  <DropHint>Supports PDF, DOC, DOCX, TXT (Max 5MB)</DropHint>
                </DropZone>
              </UploadPanel>
              <TypesHeading>Supported Document Types</TypesHeading>
              <TypeGrid>
                {documentTypes.map((name) => (
                  <TypeItem key={name}><FileText size={20} />{name}</TypeItem>
                ))}
              </TypeGrid>
            </Content>
          </Card>
          <DevBadge><NextMark /></DevBadge>
        </Page>
        <Scrollbar>
          <Triangle />
          <Thumb />
          <Triangle down />
        </Scrollbar>
      </Viewport>

      <Taskbar>
        <WindowsLogo />
        <SearchPill>
          <SearchIcon />
          <span>Search</span>
          <GiftArt />
        </SearchPill>
        <AppSlot><TaskViewIcon /></AppSlot>
        <AppSlot><CopilotIcon /></AppSlot>
        <AppSlot $running><FolderIcon /></AppSlot>
        <AppSlot $running><EdgeIcon /></AppSlot>
        <AppSlot><StoreIcon /></AppSlot>
        <AppSlot $focused><ChromeIcon /></AppSlot>
        <AppSlot $running><FaWhatsapp size={34} color="#25d366" /></AppSlot>
        <AppSlot><NotionBox><SiNotion size={24} /></NotionBox></AppSlot>
        <AppSlot><NetflixIcon /></AppSlot>
        <AppSlot><YouTube w={30} h={22} /></AppSlot>
        <AppSlot><NetworkIcon /></AppSlot>
        <AppSlot><SiOpenai size={29} /></AppSlot>
        <AppSlot $running><PhotosIcon /></AppSlot>
        <AppSlot $running><CodeIcon /></AppSlot>
        <Tray>
          <WeatherBox>
            <CloudMoon />
            <WeatherBadge>9+</WeatherBadge>
          </WeatherBox>
          <Stack $width={156} $align="left" $muted $spacing={0.08}><span>29°C</span><span>Mostly clear</span></Stack>
          <TrayIcon $width={30}><ChevronUp size={20} strokeWidth={2.4} /></TrayIcon>
          <Stack $width={66} $align="center"><span>ENG</span><span>IN</span></Stack>
          <TrayIcon $width={30}><WifiIcon /></TrayIcon>
          <TrayIcon $width={30}><VolumeIcon /></TrayIcon>
          <TrayIcon $width={30}><BatteryIcon /></TrayIcon>
          <Stack $width={93} $align="right" $spacing={0.15}><span>00:04</span><span>29-04-2025</span></Stack>
          <TrayIcon $width={39}><BellIcon /></TrayIcon>
          <TrayIcon $width={14} />
        </Tray>
      </Taskbar>
    </Screen>
  );
}
